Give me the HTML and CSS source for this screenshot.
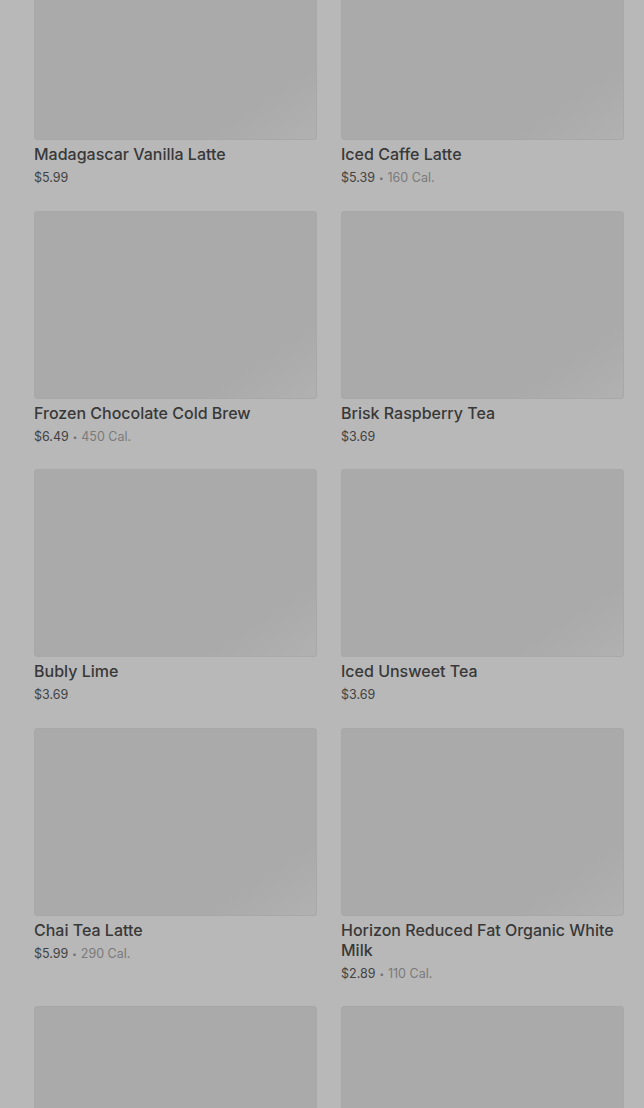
FILE: index.html
```html
<!doctype html>
<html lang="en">
<head>
  <meta charset="utf-8">
  <title>Menu</title>
  <meta name="viewport" content="width=device-width, initial-scale=1">
  <link rel="stylesheet" href="styles.css">
</head>
<body>
  <div class="menu-grid">
    <div class="item">
      <div class="item-img"></div>
      <div class="item-name">Madagascar Vanilla Latte</div>
      <div class="item-meta"><span class="price">$5.99</span></div>
    </div>
    <div class="item">
      <div class="item-img"></div>
      <div class="item-name">Iced Caffe Latte</div>
      <div class="item-meta"><span class="price">$5.39</span><span class="dot">•</span><span class="cal">160 Cal.</span></div>
    </div>
    <div class="item">
      <div class="item-img"></div>
      <div class="item-name">Frozen Chocolate Cold Brew</div>
      <div class="item-meta"><span class="price">$6.49</span><span class="dot">•</span><span class="cal">450 Cal.</span></div>
    </div>
    <div class="item">
      <div class="item-img"></div>
      <div class="item-name">Brisk Raspberry Tea</div>
      <div class="item-meta"><span class="price">$3.69</span></div>
    </div>
    <div class="item">
      <div class="item-img"></div>
      <div class="item-name">Bubly Lime</div>
      <div class="item-meta"><span class="price">$3.69</span></div>
    </div>
    <div class="item">
      <div class="item-img"></div>
      <div class="item-name">Iced Unsweet Tea</div>
      <div class="item-meta"><span class="price">$3.69</span></div>
    </div>
    <div class="item">
      <div class="item-img"></div>
      <div class="item-name">Chai Tea Latte</div>
      <div class="item-meta"><span class="price">$5.99</span><span class="dot">•</span><span class="cal">290 Cal.</span></div>
    </div>
    <div class="item">
      <div class="item-img"></div>
      <div class="item-name">Horizon Reduced Fat Organic White Milk</div>
      <div class="item-meta"><span class="price">$2.89</span><span class="dot">•</span><span class="cal">110 Cal.</span></div>
    </div>
    <div class="item">
      <div class="item-img"></div>
    </div>
    <div class="item">
      <div class="item-img"></div>
    </div>
  </div>
</body>
</html>
```

FILE: styles.css
```css
html, body {
  margin: 0;
  background: #b8b8b8;
  font-family: 'Inter', 'Roboto', sans-serif;
  overflow: hidden;
}
.menu-grid {
  display: grid;
  grid-template-columns: 283px 283px;
  column-gap: 24px;
  row-gap: 22.5px;
  padding: 0 20px 0 34px;
  margin-top: -48px;
}
.item-img {
  height: 188px;
  border-radius: 4px;
  background: linear-gradient(to bottom right, #aaaaaa 80%, #b1b1b1 100%);
  box-shadow: inset 0 0 0 1px #a8a8a8;
}
.item-name {
  margin-top: 4px;
  font-size: 16px;
  font-weight: 500;
  line-height: 20px;
  color: #383838;
  letter-spacing: 0;
}
.item-meta {
  margin-top: 4px;
  font-size: 12.5px;
  line-height: 20px;
  color: #424242;
}
.dot {
  margin: 0 4px;
  font-size: 8px;
  color: #6f6f6f;
  vertical-align: 1px;
}
.cal {
  color: #7a7a7a;
}
```
